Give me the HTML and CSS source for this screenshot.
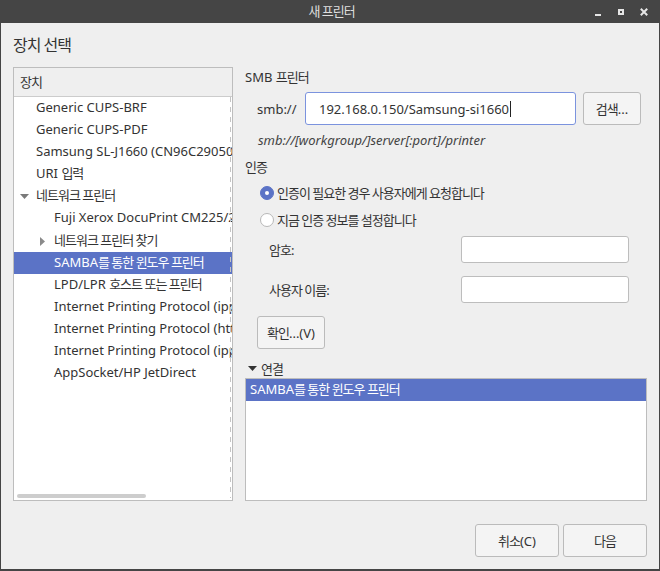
FILE: index.html
```html
<!DOCTYPE html>
<html lang="ko">
<head>
<meta charset="utf-8">
<title>새 프린터</title>
<link rel="stylesheet" href="styles.css">
</head>
<body>
<div class="window">
  <div class="titlebar">
    <div class="title"><span class="k">새 프린터</span></div>
    <div class="controls">
      <svg class="ctl" viewBox="0 0 16 16"><rect x="5" y="10" width="6" height="2" fill="#e6e6e6"/></svg>
      <svg class="ctl" viewBox="0 0 16 16"><path d="M5 5h6v6H5z M7 7v2h2V7z" fill="#e6e6e6" fill-rule="evenodd"/></svg>
      <svg class="ctl" viewBox="0 0 16 16"><path d="M5.5 5.5l5 5M10.5 5.5l-5 5" stroke="#e6e6e6" stroke-width="2" stroke-linecap="square"/></svg>
    </div>
  </div>
  <div class="frame">
    <div class="heading"><span class="k">장치 선택</span></div>
    <div class="main">
      <div class="devices">
        <div class="devices-head"><span class="k">장치</span></div>
        <div class="tree">
          <div class="row l1">Generic CUPS-BRF</div>
          <div class="row l1">Generic CUPS-PDF</div>
          <div class="row l1">Samsung SL-J1660 (CN96C29050)</div>
          <div class="row l1">URI <span class="k">입력</span></div>
          <div class="row l1x"><span class="exp"><svg width="9" height="5" viewBox="0 0 9 5"><path d="M0 0h9L4.5 5z" fill="#7a7a7a"/></svg></span><span class="k">네트워크 프린터</span></div>
          <div class="row l2">Fuji Xerox DocuPrint CM225/228 fw</div>
          <div class="row l2x tall"><span class="exp2"><svg width="5" height="9" viewBox="0 0 5 9"><path d="M0 0v9l5-4.5z" fill="#8a8a8a"/></svg></span><span class="k">네트워크 프린터 찾기</span></div>
          <div class="row l2 sel">SAMBA<span class="k">를 통한 윈도우 프린터</span></div>
          <div class="row l2">LPD/LPR <span class="k">호스트 또는 프린터</span></div>
          <div class="row l2">Internet Printing Protocol (ipps)</div>
          <div class="row l2">Internet Printing Protocol (https)</div>
          <div class="row l2">Internet Printing Protocol (ipp)</div>
          <div class="row l2">AppSocket/HP JetDirect</div>
          <div class="hscroll"></div>
        </div>
      </div>
      <div class="settings">
        <div class="label-line">SMB <span class="k">프린터</span></div>
        <div class="uri-row">
          <div class="uri-label">smb://</div>
          <div class="field focus uri"><span>192.168.0.150/Samsung-si1660</span><span class="caret"></span></div>
          <div class="btn browse"><span><span class="k">검색</span>...</span></div>
        </div>
        <div class="hint">smb://[workgroup/]server[:port]/printer</div>
        <div class="section"><span class="k">인증</span></div>
        <div class="radio-row"><span class="radio on"></span><span class="k">인증이 필요한 경우 사용자에게 요청합니다</span></div>
        <div class="radio-row"><span class="radio"></span><span class="k">지금 인증 정보를 설정합니다</span></div>
        <div class="form">
          <div class="form-label"><span class="k">암호</span>:</div>
          <div class="field small"></div>
          <div class="form-label"><span class="k">사용자 이름</span>:</div>
          <div class="field small"></div>
        </div>
        <div class="btn verify"><span><span class="k">확인</span>...(V)</span></div>
        <div class="expander"><svg width="9" height="5" viewBox="0 0 9 5"><path d="M0 0h9L4.5 5z" fill="#333"/></svg><span class="k">연결</span></div>
        <div class="conn-list">
          <div class="conn sel">SAMBA<span class="k">를 통한 윈도우 프린터</span></div>
        </div>
      </div>
    </div>
    <div class="footer">
      <div class="btn action"><span><span class="k">취소</span>(C)</span></div>
      <div class="btn action"><span class="k">다음</span></div>
    </div>
  </div>
</div>
</body>
</html>
```

FILE: styles.css
```css
* {
  box-sizing: border-box;
  margin: 0;
  padding: 0;
}

html, body {
  width: 660px;
  height: 571px;
  overflow: hidden;
}

body {
  font-family: "Noto Sans", "Noto Sans CJK KR", sans-serif;
  font-size: 13px;
  color: #333;
  background: #efefef;
}

.k {
  letter-spacing: -1px;
}

.window {
  width: 660px;
  height: 571px;
  display: flex;
  flex-direction: column;
  background: #efefef;
}

.titlebar {
  flex: none;
  height: 23px;
  background: #454545;
  color: #dedede;
  display: grid;
  grid-template-columns: 1fr auto 1fr;
  align-items: center;
}

.title {
  grid-column: 2;
  font-size: 13px;
  line-height: 23px;
  padding-left: 3px;
}

.controls {
  grid-column: 3;
  justify-self: end;
  display: flex;
  gap: 7px;
  padding-right: 8px;
}

.ctl {
  display: block;
  width: 16px;
  height: 16px;
}

.frame {
  flex: 1;
  display: flex;
  flex-direction: column;
  border: solid #454545;
  border-width: 0 1px 2px 1px;
  padding: 0 12px 12px 12px;
}

.heading {
  height: 44px;
  line-height: 44px;
  font-size: 16px;
}

.main {
  height: 434px;
  display: flex;
  gap: 12px;
}

/* device tree */
.devices {
  width: 220px;
  flex: none;
  border: 1px solid #bdbdbd;
  display: flex;
  flex-direction: column;
}

.devices-head {
  height: 29px;
  line-height: 28px;
  border-bottom: 1px solid #cccccc;
  padding-left: 6px;
}

.tree {
  flex: 1;
  background: #fff;
  position: relative;
  overflow: hidden;
}

.tree::after {
  content: "";
  position: absolute;
  top: 0;
  bottom: 2px;
  right: 1px;
  width: 1px;
  background: repeating-linear-gradient(to bottom, #c4c4c4 0 5px, transparent 5px 10px);
}

.row {
  height: 22px;
  line-height: 21px;
  white-space: nowrap;
}

.row.tall {
  height: 23px;
  line-height: 23px;
}

.row.l1 { padding-left: 22px; }
.row.l1x { padding-left: 6px; }
.row.l2 { padding-left: 40px; }
.row.l2x { padding-left: 26px; }

.exp,
.exp2 {
  display: inline-block;
  vertical-align: middle;
  line-height: 0;
}

.exp { width: 16px; }
.exp2 { width: 14px; }

.exp svg,
.exp2 svg {
  display: block;
}

.sel {
  background: #5b73c6;
  color: #fff;
}

.hscroll {
  position: absolute;
  left: 3px;
  bottom: 2px;
  width: 129px;
  height: 4px;
  border-radius: 2px;
  background: #cdcdcd;
}

/* right column */
.settings {
  flex: 1;
  display: flex;
  flex-direction: column;
}

.label-line {
  height: 22px;
  line-height: 21px;
}

.uri-row {
  margin-top: 3px;
  height: 33px;
  display: flex;
  align-items: center;
  padding-left: 12px;
}

.uri-label {
  width: 48px;
  flex: none;
}

.field {
  background: #fff;
  border: 1px solid #bdbdbd;
  border-radius: 3px;
}

.field.focus {
  border-color: #7b93de;
}

.field.uri {
  width: 271px;
  height: 33px;
  padding-left: 13px;
  display: flex;
  align-items: center;
}

.caret {
  display: inline-block;
  width: 1px;
  height: 16px;
  background: #222;
  margin-left: 1px;
}

.btn {
  background: #f4f4f4;
  border: 1px solid #bbbbbb;
  border-radius: 3px;
  height: 33px;
  display: flex;
  align-items: center;
  justify-content: center;
}

.btn.browse {
  width: 58px;
  margin-left: 7px;
}

.hint {
  margin-top: 4px;
  height: 22px;
  line-height: 22px;
  padding-left: 13px;
  font-style: italic;
  color: #444;
}

.section {
  margin-top: 6px;
  height: 22px;
  line-height: 21px;
}

.radio-row {
  height: 27px;
  display: flex;
  align-items: center;
  gap: 3px;
  padding-left: 15px;
}

.radio {
  width: 14px;
  height: 14px;
  border-radius: 50%;
  border: 1px solid #b8b8b8;
  background: #fff;
  flex: none;
  position: relative;
}

.radio.on {
  background: #5b73c6;
  border-color: #5b73c6;
}

.radio.on::after {
  content: "";
  position: absolute;
  left: 4px;
  top: 4px;
  width: 4px;
  height: 4px;
  border-radius: 50%;
  background: #fff;
}

.form {
  margin-top: 3px;
  display: grid;
  grid-template-columns: 192px 168px;
  grid-auto-rows: 27px;
  row-gap: 13px;
  padding-left: 24px;
  align-items: center;
}

.field.small {
  height: 27px;
}

.btn.verify {
  margin-top: 13px;
  margin-left: 12px;
  width: 68px;
}

.expander {
  margin-top: 10px;
  height: 19px;
  display: flex;
  align-items: center;
  gap: 4px;
  padding-left: 3px;
}

.expander svg {
  display: block;
}

.conn-list {
  flex: 1;
  background: #fff;
  border: 1px solid #bdbdbd;
}

.conn {
  height: 22px;
  line-height: 21px;
  padding-left: 4px;
}

.footer {
  margin-top: 23px;
  display: flex;
  justify-content: flex-end;
  gap: 4px;
}

.btn.action {
  width: 84px;
}
```
